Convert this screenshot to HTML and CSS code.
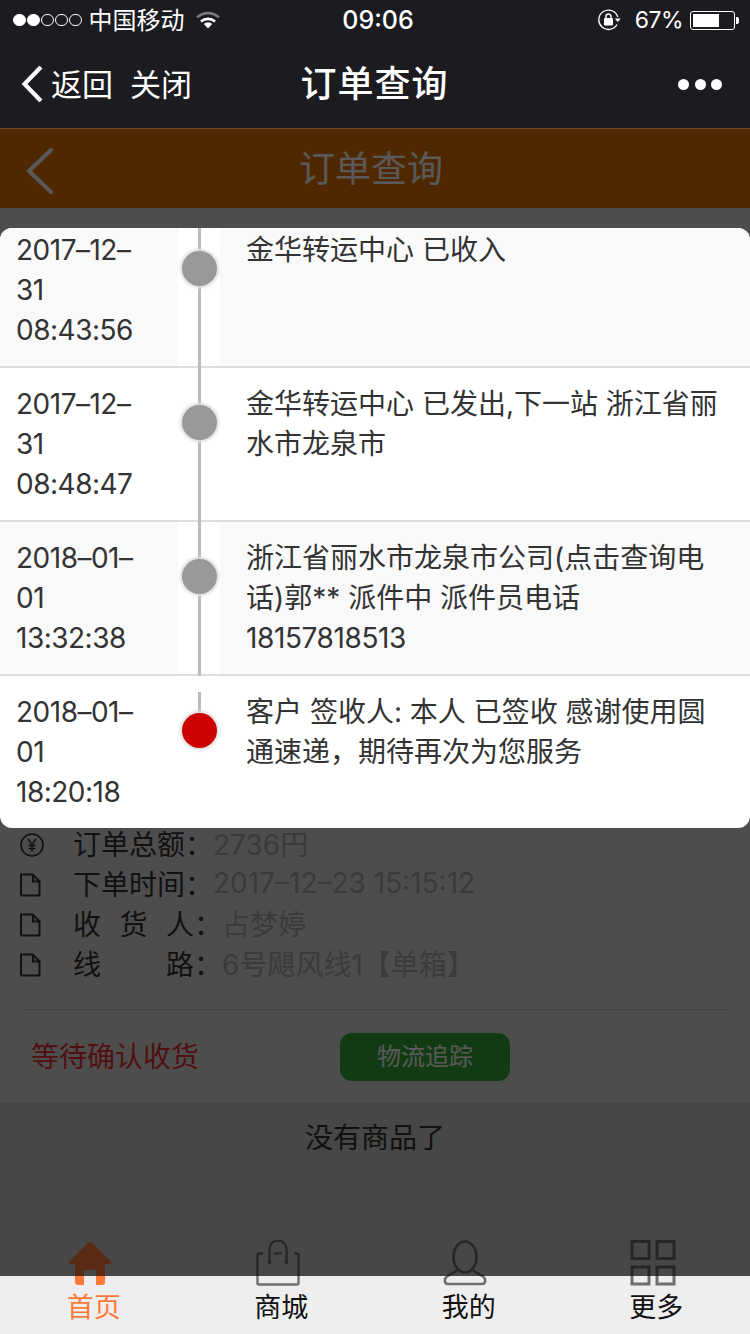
FILE: index.html
```html
<!DOCTYPE html>
<html>
<head>
    <title>订单查询</title>
    <link rel="stylesheet" href="styles.css">
</head>
<body>
<div class="screen">
    <div class="statusbar">
        <div class="status-left">
            <span class="signal"><i class="on"></i><i class="on"></i><i></i><i></i><i></i></span>
            <span class="carrier">中国移动</span>
            <svg class="wifi" width="24" height="18" viewBox="0 0 24 18"><path d="M1 6.500a16 16 0 0 1 22 0" fill="none" stroke="#77777c" stroke-width="2.600"/><path d="M5 10.500a10.500 10.500 0 0 1 14 0" fill="none" stroke="#fff" stroke-width="2.600"/><path d="M7.800 13a6 6 0 0 1 8.400 0L12 17.500z" fill="#fff"/></svg>
        </div>
        <div class="status-time">09:06</div>
        <div class="status-right">
            <svg class="lock" width="24" height="22" viewBox="0 0 24 22"><path d="M19 15.500A9.700 9.700 0 1 1 19.800 8" fill="none" stroke="#fff" stroke-width="1.300"/><path d="M16.800 9.500h6l-3 3.400z" fill="#fff"/><rect x="6" y="9" width="9" height="7.500" rx="1" fill="#fff"/><path d="M8 9.500V7.500a2.500 2.500 0 0 1 5 0v2" fill="none" stroke="#fff" stroke-width="1.500"/></svg>
            <span class="percent">67%</span>
            <span class="battery"><span class="battery-fill"></span></span>
        </div>
    </div>
    <div class="wxbar">
        <div class="wx-left">
            <svg width="22" height="36" viewBox="0 0 22 36"><path d="M18.500 2.500L3.500 18l15 15.500" fill="none" stroke="#fff" stroke-width="4.200" stroke-linecap="square"/></svg>
            <span class="wx-back">返回</span>
            <span class="wx-close">关闭</span>
        </div>
        <div class="wx-title">订单查询</div>
        <div class="wx-more"><i></i><i></i><i></i></div>
    </div>

    <div class="content">
        <div class="header">
            <svg class="header-back" width="30" height="48" viewBox="0 0 30 48"><path d="M26 3L4 24l22 21" fill="none" stroke="#fff" stroke-width="4" stroke-linecap="round"/></svg>
            <span class="header-title">订单查询</span>
        </div>

        <div class="order">
            <div class="order-row">
                <svg class="order-icon" width="24" height="24" viewBox="0 0 24 24"><circle cx="12" cy="12" r="11" fill="none" stroke="#333" stroke-width="1.600"/><path d="M8 6l4 6 4-6M12 12v7M8.500 12.500h7M8.500 15.500h7" fill="none" stroke="#333" stroke-width="1.400"/></svg>
                <span class="order-label">订单总额</span><span>：</span><span class="order-value">2736円</span>
            </div>
            <div class="order-row">
                <svg class="order-icon" width="24" height="24" viewBox="0 0 24 24"><path d="M1 1.500h12l6.500 7v13a1 1 0 0 1-1 1H2a1 1 0 0 1-1-1zM13 1.500v7h6.500" fill="none" stroke="#333" stroke-width="2"/></svg>
                <span class="order-label">下单时间</span><span>：</span><span class="order-value">2017–12–23 15:15:12</span>
            </div>
            <div class="order-row">
                <svg class="order-icon" width="24" height="24" viewBox="0 0 24 24"><path d="M1 1.500h12l6.500 7v13a1 1 0 0 1-1 1H2a1 1 0 0 1-1-1zM13 1.500v7h6.500" fill="none" stroke="#333" stroke-width="2"/></svg>
                <span class="order-label wide">收货人</span><span>：</span><span class="order-value">占梦婷</span>
            </div>
            <div class="order-row">
                <svg class="order-icon" width="24" height="24" viewBox="0 0 24 24"><path d="M1 1.500h12l6.500 7v13a1 1 0 0 1-1 1H2a1 1 0 0 1-1-1zM13 1.500v7h6.500" fill="none" stroke="#333" stroke-width="2"/></svg>
                <span class="order-label wide">线路</span><span>：</span><span class="order-value">6号飓风线1【单箱】</span>
            </div>
        </div>
        <div class="order-actions">
            <span class="order-state">等待确认收货</span>
            <span class="track-btn">物流追踪</span>
        </div>
        <div class="no-more">没有商品了</div>

        <div class="mask"></div>

        <div class="modal">
            <div class="step odd first">
                <div class="step-time">2017–12–<wbr>31 08:43:56</div>
                <div class="step-axis"><span class="dot"></span></div>
                <div class="step-text">金华转运中心 已收入</div>
            </div>
            <div class="step">
                <div class="step-time">2017–12–<wbr>31 08:48:47</div>
                <div class="step-axis"><span class="dot"></span></div>
                <div class="step-text">金华转运中心 已发出,下一站 浙江省丽水市龙泉市</div>
            </div>
            <div class="step odd">
                <div class="step-time">2018–01–<wbr>01 13:32:38</div>
                <div class="step-axis"><span class="dot"></span></div>
                <div class="step-text">浙江省丽水市龙泉市公司(点击查询电话)郭** 派件中 派件员电话 <span class="num">18157818513</span></div>
            </div>
            <div class="step last">
                <div class="step-time">2018–01–<wbr>01 18:20:18</div>
                <div class="step-axis"><span class="dot"></span></div>
                <div class="step-text">客户 签收人: 本人 已签收 感谢使用圆通速递，期待再次为您服务</div>
            </div>
        </div>
    </div>

    <div class="tabbar">
        <div class="tab active">
            <svg class="tab-icon" width="46" height="46" viewBox="0 0 46 46"><path d="M23 1L2 21.500a1.500 1.500 0 0 0 1 2.500h5v18a3 3 0 0 0 3 3h6V31a1 1 0 0 1 1-1h10a1 1 0 0 1 1 1v14h6a3 3 0 0 0 3-3V24h5a1.500 1.500 0 0 0 1-2.500z" fill="#ff7a3a"/></svg>
            <span>首页</span>
        </div>
        <div class="tab">
            <svg class="tab-icon" width="46" height="46" viewBox="0 0 46 46"><path d="M8 13.500H4a1.500 1.500 0 0 0-1.500 1.500v28A1.500 1.500 0 0 0 4 44.500h38a1.500 1.500 0 0 0 1.500-1.500V15a1.500 1.500 0 0 0-1.500-1.500h-3" fill="none" stroke="#6e6e6e" stroke-width="2.400"/><path d="M14.500 22V9a8.500 8.500 0 0 1 17 0v13" fill="none" stroke="#6e6e6e" stroke-width="2.400"/><circle cx="14.500" cy="22" r="2" fill="#6e6e6e"/><circle cx="31.500" cy="22" r="2" fill="#6e6e6e"/><path d="M19 13.500h8" stroke="#6e6e6e" stroke-width="2"/></svg>
            <span>商城</span>
        </div>
        <div class="tab">
            <svg class="tab-icon" width="46" height="46" viewBox="0 0 46 46"><ellipse cx="23" cy="17" rx="11.500" ry="15.500" fill="none" stroke="#6e6e6e" stroke-width="2.600"/><path d="M15 30.500L5 36.500c-3 2-3 7.500 1 7.500h34c4 0 4-5.500 1-7.500l-10-6" fill="none" stroke="#6e6e6e" stroke-width="2.600"/></svg>
            <span>我的</span>
        </div>
        <div class="tab">
            <svg class="tab-icon" width="46" height="46" viewBox="0 0 46 46"><g fill="none" stroke="#6e6e6e" stroke-width="3"><rect x="2" y="1.500" width="17" height="17"/><rect x="27" y="1.500" width="17" height="17"/><rect x="2" y="27" width="17" height="17"/><rect x="27" y="27" width="17" height="17"/></g></svg>
            <span>更多</span>
        </div>
    </div>
</div>
</body>
</html>
```

FILE: styles.css
```css
* { box-sizing: border-box; }
body { margin: 0; font-family: Inter, "Noto Sans CJK SC", sans-serif; color: #333; }
i { display: block; }
.screen { width: 750px; height: 1334px; display: flex; flex-direction: column; overflow: hidden; background: #dcdcdc; }

/* top bars */
.statusbar { flex: none; height: 40px; background: #1b1b20; color: #fff; display: grid; grid-template-columns: 1fr auto 1fr; align-items: center; padding: 0 15px 0 13px; font-size: 24px; }
.status-left { display: flex; align-items: center; }
.signal { display: flex; gap: 1.500px; margin-right: 7px; }
.signal i { width: 12.500px; height: 12.500px; border-radius: 50%; border: 1px solid #fff; }
.signal i.on { background: #fff; }
.carrier { padding-bottom: 4px; }
.wifi { margin-left: 11px; }
.status-time { font-size: 25px; font-weight: 500; margin-left: 8px; }
.status-right { display: flex; align-items: center; justify-content: flex-end; }
.lock { margin-right: 13px; }
.percent { margin-right: 7px; font-size: 23px; letter-spacing: -.5px; }
.battery { width: 45px; height: 19px; border: 1px solid #fff; border-radius: 3px; padding: 2px; position: relative; }
.battery::after { content: ""; position: absolute; right: -5px; top: 5px; width: 3px; height: 7px; background: #fff; border-radius: 0 2px 2px 0; }
.battery-fill { display: block; width: 67%; height: 100%; background: #fff; }

.wxbar { flex: none; height: 89px; background: #1b1b20; color: #fff; display: grid; grid-template-columns: 1fr auto 1fr; align-items: center; padding: 0 28px 0 21px; border-bottom: 1px solid #6a4a2a; }
.wx-left { display: flex; align-items: center; font-size: 31px; }
.wx-back { margin-left: 8px; padding-bottom: 4px; }
.wx-close { margin-left: 17px; padding-bottom: 4px; }
.wx-title { font-size: 36px; font-weight: 500; letter-spacing: 1px; padding-bottom: 6px; margin-left: 6px; }
.wx-more { display: flex; justify-content: flex-end; gap: 5.500px; }
.wx-more i { width: 11px; height: 11px; border-radius: 50%; background: #fff; }

/* page under the mask */
.content { flex: none; height: 1147px; position: relative; overflow: hidden; }
.header { height: 79px; background: #e27200; color: #fff; display: flex; align-items: center; justify-content: center; position: relative; font-size: 36px; padding-right: 8px; }
.header-back { position: absolute; left: 25px; top: 18px; }
.header-title { padding-bottom: 6px; }
.order { padding: 617px 0 24px 0; margin: 0 20px; font-size: 28px; border-bottom: 1px solid #c0c0c0; }
.order-row { height: 40px; display: flex; align-items: center; color: #333; }
.order-row span { padding-bottom: 4px; }
.order-icon { margin-right: 29px; flex: none; }
.order-label { display: inline-block; width: 112px; }
.order-label.wide { width: 121px; text-align-last: justify; }
.order-value { color: #a5a5a5; }
.order-actions { height: 93px; padding: 0 0 0 31px; display: flex; align-items: center; font-size: 28px; }
.order-state { width: 309px; color: #e83030; padding-bottom: 4px; }
.track-btn { width: 170px; height: 48px; border-radius: 12px; background: #38a838; color: #fff; font-size: 24px; display: flex; align-items: center; justify-content: center; padding-bottom: 4px; }
.no-more { background: #cbcbcb; height: 173px; padding-top: 15px; font-size: 28px; line-height: 40px; text-align: center; color: #333; }

.mask { position: absolute; inset: 0; z-index: 2; background: rgba(0, 0, 0, .65); }

/* tracking popup */
.modal { position: absolute; z-index: 3; left: 0; right: 0; top: 99px; height: 600px; border-radius: 12px; overflow: hidden; background: #fff; }
.step { display: grid; grid-template-columns: 178px 42px 1fr; height: 154px; border-bottom: 2px solid #ddd; font-size: 28px; line-height: 40px; }
.step.first { margin-top: -14px; }
.step.last { border-bottom: 0; height: 152px; }
.step.odd { background: #f9f9f9; }
.step-time { padding: 16px 30px 0 16px; letter-spacing: -.5px; }
.step-axis { background: #fff; position: relative; }
.step-axis::before { content: ""; position: absolute; left: 20px; top: 0; bottom: -2px; width: 2.500px; background: #bbb; }
.step.last .step-axis::before { top: 16px; bottom: auto; height: 30px; }
.dot { position: absolute; left: 3.500px; top: 37px; width: 35px; height: 35px; border-radius: 50%; background: #999; box-shadow: 0 0 3px 2px #ddd; }
.step.last .dot { background: #c00; }
.step-text { padding: 3px 17px 0 26px; margin-top: 13px; }
.num { letter-spacing: -.4px; }

/* bottom tabs */
.tabbar { flex: none; height: 58px; background: #eee; display: grid; grid-template-columns: repeat(4, 1fr); position: relative; z-index: 1; }
.tab { margin-top: -36px; display: flex; flex-direction: column; align-items: center; font-size: 27px; line-height: 38px; color: #111; }
.tab span { padding-top: 3px; }
.tab-icon { flex: none; margin-left: -7px; }
.tab.active { color: #ff7a3a; }
```
